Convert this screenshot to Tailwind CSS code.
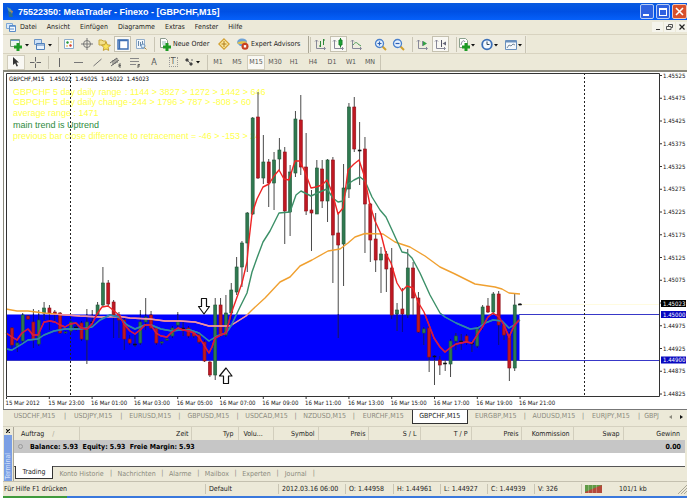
<!DOCTYPE html>
<html lang="de">
<head>
    <meta charset="UTF-8">
    <meta name="viewport" content="width=device-width, initial-scale=1.0">
    <title>75522350: MetaTrader - Finexo - [GBPCHF,M15]</title>
    <script src="https://cdn.jsdelivr.net/npm/@tailwindcss/browser@4"></script>
</head>
<body class="flex min-h-screen flex-col bg-white px-[3px] pt-[3px] font-['DejaVu_Sans_Condensed','DejaVu_Sans','Liberation_Sans',sans-serif] text-[7px] leading-[10px] text-[#222]">

    <!-- Title bar -->
    <header class="flex h-[17px] items-center bg-linear-to-b from-[#0a5be0] via-[#0050e4] to-[#0660fa] pl-[3px]">
        <svg class="mr-[4px] h-[12px] w-[8px]" viewBox="0 0 8 12"><path d="M1 1l4 2 1 3-2 1-2-3z" fill="#5a9aa8"/><path d="M2 5l4 2 1 4H3z" fill="#2c6f8a"/><path d="M4 4l3 1-1 3z" fill="#b08a5c"/></svg>
        <h1 class="grow font-['Liberation_Sans',sans-serif] text-[9px] font-bold text-white">75522350: MetaTrader - Finexo - [GBPCHF,M15]</h1>
        <div class="flex gap-[2px]">
            <button aria-label="Minimieren" class="flex h-[15px] w-[14px] items-end rounded-[2px] border border-[#b8cdf5] bg-[#2f62e0] p-[2px]"><span class="h-[2px] w-[6px] bg-white"></span></button>
            <button aria-label="Maximieren" class="flex h-[15px] w-[14px] items-center justify-center rounded-[2px] border border-[#b8cdf5] bg-[#2f62e0]"><span class="h-[8px] w-[8px] border border-t-2 border-white"></span></button>
            <button aria-label="Schließen" class="flex h-[15px] w-[15px] items-center justify-center rounded-[2px] border border-[#f0c8bc] bg-[#d8502c]"><svg class="h-[9px] w-[9px]" viewBox="0 0 9 9"><path d="M1 1l7 7M8 1L1 8" stroke="#fff" stroke-width="1.6"/></svg></button>
        </div>
    </header>

    <!-- Menu -->
    <nav class="flex h-[14px] items-center gap-[10px] bg-[#ece9d8] pl-[3px]">
        <svg class="-mr-[6px] h-[10px] w-[10px]" viewBox="0 0 10 10"><path d="M.5 1.500h6v5h-6z" fill="#dcebfa" stroke="#7ba6d6"/><path d="M3.500 3.500h6v6h-6z" fill="#f4f9ff" stroke="#5b8cc8"/><path d="M4 4.500h5" stroke="#7ba6d6"/><path d="M5 8V6m2 2V6" stroke="#5b8cc8"/></svg>
        <button>Datei</button>
        <button>Ansicht</button>
        <button>Einfügen</button>
        <button>Diagramme</button>
        <button>Extras</button>
        <button>Fenster</button>
        <button>Hilfe</button>
        <div class="ml-auto flex gap-px">
            <button aria-label="Fenster minimieren" class="flex h-[10px] w-[11px] items-end justify-center bg-[#f5f4ec] pb-[2px]"><span class="h-px w-[4px] bg-[#333]"></span></button>
            <button aria-label="Fenster wiederherstellen" class="flex h-[10px] w-[11px] items-center justify-center bg-[#f5f4ec]"><svg class="h-[7px] w-[7px]" viewBox="0 0 7 7"><path d="M2.500 2V.5h4v3H5M.5 2.500H5v3H.5z" fill="none" stroke="#555"/></svg></button>
            <button aria-label="Fenster schließen" class="flex h-[10px] w-[11px] items-center justify-center bg-[#f5f4ec]"><svg class="h-[6px] w-[6px]" viewBox="0 0 6 6"><path d="M.5.5l5 5M5.500.5l-5 5" stroke="#222" stroke-width="1.200"/></svg></button>
        </div>
    </nav>

    <!-- Standard toolbar -->
    <div class="flex h-[19px] items-center gap-px border-t border-[#d8d3c0] bg-[#efecdf] pl-[5px]">
        <button aria-label="Neues Diagramm" class="flex w-[22px] items-center"><svg class="h-[15px] w-[22px]" viewBox="0 0 22 15"><path d="M2.500 2.500h9v7h-9z" fill="#eef6ee" stroke="#7d9a80"/><path d="M3 3.500h8" stroke="#6b9ad0"/><path d="M10 6v8M6 10h8" stroke="#1d9a24" stroke-width="3"/><path d="M17 7h4l-2 2.500z" fill="#111"/></svg></button>
        <button aria-label="Profile" class="flex w-[22px] items-center"><svg class="h-[15px] w-[22px]" viewBox="0 0 22 15"><path d="M3.500 2.500h7v5h-7z" fill="#cfe2f7" stroke="#6a94c8"/><path d="M5.500 6.500h8v6h-8z" fill="#eaf3fc" stroke="#5080bb"/><path d="M6 8h7" stroke="#5080bb"/><path d="M17 7h4l-2 2.500z" fill="#111"/></svg></button>
        <span class="ml-1 h-[15px] w-px bg-[#c9c5b4]"></span>
        <button aria-label="Marktübersicht" class="flex h-[15px] w-[17px] items-center justify-center"><svg class="h-[12px] w-[12px]" viewBox="0 0 12 12"><path d="M1.500 1.500h9v9h-9z" fill="#fafdff" stroke="#8aaacb"/><path d="M3 4l2-1 1 2-2 1z" fill="#2a9a3a"/><path d="M6 7l2-1 1 2-2 1z" fill="#d8402c"/><path d="M4 7v2M8 3v2" stroke="#e0a52c"/></svg></button>
        <button aria-label="Datenfenster" class="flex h-[15px] w-[17px] items-center justify-center"><svg class="h-[12px] w-[12px]" viewBox="0 0 12 12"><circle cx="6" cy="6" r="3.500" fill="none" stroke="#777"/><path d="M6 0v12M0 6h12" stroke="#777"/></svg></button>
        <button aria-label="Navigator" class="flex h-[15px] w-[17px] items-center justify-center"><svg class="h-[13px] w-[13px]" viewBox="0 0 13 13"><path d="M1 2h3l1 1h3v4H1z" fill="#f3e08a" stroke="#c9a83a"/><path d="M8 4l1.400 2.800 3 .4-2.200 2.200.5 3L8 11l-2.700 1.400.5-3-2.200-2.200 3-.4z" fill="#fbe45a" stroke="#b98f1e" stroke-width=".8"/></svg></button>
        <button aria-label="Terminal" aria-pressed="true" class="flex h-[16px] w-[17px] items-center justify-center border border-[#c5c1b0] bg-[#f9f8f3]"><svg class="h-[11px] w-[12px]" viewBox="0 0 12 11"><path d="M1 1h10v9H1z" fill="#fff" stroke="#3c6eb4" stroke-width="1.400"/><path d="M2 1.500h8M2.500 2v8" stroke="#3c6eb4" stroke-width="1.400"/></svg></button>
        <button aria-label="Strategietester" class="flex h-[15px] w-[17px] items-center justify-center"><svg class="h-[12px] w-[12px]" viewBox="0 0 12 12"><path d="M1.500 1.500h8v9h-8z" fill="#f2f7fc" stroke="#92aecb"/><path d="M3.500 3v5M5.500 4v4M7.500 3v4" stroke="#6788aa"/><circle cx="8" cy="8" r="2" fill="#dcecf9" stroke="#6c93bd"/><path d="M9.500 9.500l2 2" stroke="#b38a3c"/></svg></button>
        <span class="ml-1 h-[15px] w-px bg-[#c9c5b4]"></span>
        <button class="flex w-[58px] items-center gap-[2px] pl-[3px] whitespace-nowrap"><svg class="h-[13px] w-[12px] shrink-0" viewBox="0 0 12 13"><path d="M1.500.5h5l2 2v7h-7z" fill="#fff" stroke="#8c9a8c"/><path d="M3 4h4M3 6h4" stroke="#9bb"/><path d="M8 5v8M4 9h8" stroke="#1d9a24" stroke-width="3"/></svg>Neue Order</button>
        <button aria-label="MetaEditor" class="flex w-[17px] items-center justify-center"><svg class="h-[12px] w-[12px]" viewBox="0 0 12 12"><path d="M6 .8L11.200 6 6 11.200.8 6z" fill="#fbe9a0" stroke="#d2a032" stroke-width="1.200"/><path d="M6 3v6M3.500 6h5" stroke="#b07d1c"/></svg></button>
        <button class="flex w-[72px] items-center gap-[2px] pl-[3px] whitespace-nowrap"><svg class="h-[12px] w-[13px] shrink-0" viewBox="0 0 13 12"><path d="M1 5c0-3 2-4.500 5-4.500S11 2 11 4L9 8H4z" fill="#6fa3d6"/><path d="M1 5c2-2 8-2 10-1l-2 2H3z" fill="#e6c24a"/><circle cx="9" cy="8.300" r="3.500" fill="#c84020"/><path d="M7.800 7.100h2.400v2.400H7.800z" fill="#fff"/></svg>Expert Advisors</button>
        <span class="ml-[2px] h-[17px] w-px bg-[#aaa695]"></span><span class="h-[15px] w-px bg-[#c9c5b4]"></span>
        <button aria-label="Balkendiagramm" class="flex h-[15px] w-[17px] items-center justify-center"><svg class="h-[12px] w-[13px]" viewBox="0 0 13 12"><path d="M2.500 2v8.500H11M1 3.500L2.500 2 4 3.500M10 9l1.500 1.500L10 12" fill="none" stroke="#889"/><path d="M6.500 3v6M5 8h1.500M9.500 1v6M9.500 2H11" stroke="#2f8a3a"/></svg></button>
        <button aria-label="Kerzendiagramm" aria-pressed="true" class="flex h-[16px] w-[17px] items-center justify-center border border-[#c5c1b0] bg-[#f9f8f3]"><svg class="h-[12px] w-[13px]" viewBox="0 0 13 12"><path d="M2.500 2v8.500H11M1 3.500L2.500 2 4 3.500M10 9l1.500 1.500L10 12" fill="none" stroke="#889"/><path d="M8.500 0v9.500" stroke="#18802a"/><path d="M7 2h3v5H7z" fill="#1ca634" stroke="#18802a"/></svg></button>
        <button aria-label="Liniendiagramm" class="flex h-[15px] w-[17px] items-center justify-center"><svg class="h-[12px] w-[13px]" viewBox="0 0 13 12"><path d="M2.500 2v8.500H11M1 3.500L2.500 2 4 3.500M10 9l1.500 1.500L10 12" fill="none" stroke="#889"/><path d="M3 7c2-3 4-3 5-1l3 2" fill="none" stroke="#4a9a54"/></svg></button>
        <button aria-label="Vergrößern" class="ml-[6px] flex h-[15px] w-[17px] items-center justify-center"><svg class="h-[13px] w-[13px]" viewBox="0 0 13 13"><path d="M8 8l4 4" stroke="#d0a030" stroke-width="2"/><circle cx="5.500" cy="5.500" r="4" fill="#e6f1fd" stroke="#4a80cc" stroke-width="1.300"/><path d="M5.500 3.500v4M3.500 5.500h4" stroke="#2d60b4" stroke-width="1.200"/></svg></button>
        <button aria-label="Verkleinern" class="flex h-[15px] w-[17px] items-center justify-center"><svg class="h-[13px] w-[13px]" viewBox="0 0 13 13"><path d="M8 8l4 4" stroke="#d0a030" stroke-width="2"/><circle cx="5.500" cy="5.500" r="4" fill="#e6f1fd" stroke="#4a80cc" stroke-width="1.300"/><path d="M3.500 5.500h4" stroke="#2d60b4" stroke-width="1.200"/></svg></button>
        <span class="ml-1 h-[15px] w-px bg-[#c9c5b4]"></span>
        <button aria-label="Automatisch scrollen" class="flex h-[15px] w-[17px] items-center justify-center"><svg class="h-[12px] w-[13px]" viewBox="0 0 13 12"><path d="M2.500 2v8.500H11M1 3.500L2.500 2 4 3.500M10 9l1.500 1.500L10 12" fill="none" stroke="#889"/><path d="M6.500 3v5" stroke="#889"/><path d="M7 3l4 2.500L7 8z" fill="#35a045"/></svg></button>
        <button aria-label="Diagrammverschiebung" aria-pressed="true" class="flex h-[16px] w-[17px] items-center justify-center border border-[#c5c1b0] bg-[#f9f8f3]"><svg class="h-[12px] w-[13px]" viewBox="0 0 13 12"><path d="M2.500 2v8.500H11M1 3.500L2.500 2 4 3.500M10 9l1.500 1.500L10 12" fill="none" stroke="#889"/><path d="M7.500 2v7" stroke="#556"/><path d="M12 3.500L8.500 5.500 12 7.500z" fill="#667"/></svg></button>
        <span class="ml-[6px] h-[15px] w-px bg-[#c9c5b4]"></span>
        <button aria-label="Indikatoren" class="flex w-[20px] items-center"><svg class="h-[15px] w-[20px]" viewBox="0 0 20 15"><path d="M1.500 1.500h6l2 2v7h-8z" fill="#fff" stroke="#8aa08c"/><path d="M3 8c1-5 3-5 4-3" fill="none" stroke="#889"/><path d="M8 6v8M4 10h8" stroke="#1d9a24" stroke-width="3"/><path d="M13 7h4l-2 2.500z" fill="#111"/></svg></button>
        <button aria-label="Perioden" class="flex w-[22px] items-center"><svg class="h-[15px] w-[22px]" viewBox="0 0 22 15"><circle cx="8" cy="7.500" r="4.800" fill="#f5faff" stroke="#3c70b8" stroke-width="1.800"/><path d="M8 4.500v3h2.500" fill="none" stroke="#345"/><path d="M15 7h4l-2 2.500z" fill="#111"/></svg></button>
        <button aria-label="Vorlagen" class="flex w-[22px] items-center"><svg class="h-[15px] w-[22px]" viewBox="0 0 22 15"><path d="M3.500 3.500h11v9h-11z" fill="#f3f7fb" stroke="#6a90bd"/><path d="M4 4.500h10" stroke="#6a90bd" stroke-width="2"/><path d="M5 11l2-3 2 1 2-2 2 1" fill="none" stroke="#789"/><path d="M16 7h4l-2 2.500z" fill="#111"/></svg></button>
        <span class="h-[17px] w-px bg-[#c9c5b4]"></span>
        <span class="h-full grow bg-[#ece9d8]"></span>
    </div>

    <!-- Drawing tools and timeframes -->
    <div class="flex h-[17px] items-center gap-px border-t border-[#d8d3c0] bg-[#ece9d8] pl-[4px] text-[#555]">
        <button aria-label="Cursor" aria-pressed="true" class="flex h-[15px] w-[18px] items-center justify-center border border-[#d0ccbb] bg-[#f9f8f3]"><svg class="h-[10px] w-[8px]" viewBox="0 0 8 10"><path d="M1 0l6 5.500H4.500L6 9 4.500 9.600 3.200 6.300 1 8z" fill="#333"/></svg></button>
        <button aria-label="Fadenkreuz" class="flex h-[15px] w-[18px] items-center justify-center"><svg class="h-[11px] w-[11px]" viewBox="0 0 11 11"><path d="M5.500 0v4.500M5.500 6.500V11M0 5.500h4.500M6.500 5.500H11" stroke="#666"/></svg></button>
        <span class="ml-[3px] h-[13px] w-px bg-[#c9c5b4]"></span>
        <button aria-label="Vertikale Linie" class="flex h-[15px] w-[18px] items-center justify-center"><span class="h-[9px] w-px bg-[#666]"></span></button>
        <button aria-label="Horizontale Linie" class="flex h-[15px] w-[18px] items-center justify-center"><span class="h-px w-[9px] bg-[#777]"></span></button>
        <button aria-label="Trendlinie" class="flex h-[15px] w-[18px] items-center justify-center"><svg class="h-[9px] w-[9px]" viewBox="0 0 9 9"><path d="M.5 8l8-7" stroke="#777"/></svg></button>
        <button aria-label="Kanal" class="flex h-[15px] w-[18px] items-center justify-center"><svg class="h-[11px] w-[12px]" viewBox="0 0 12 11"><path d="M0 6l7-5M1 9l8-6M3 3v5M5 2v5M7 1v5" stroke="#666"/><path d="M11 7H9v3h2M9 8.500h2" fill="none" stroke="#444" stroke-width=".8"/></svg></button>
        <button aria-label="Fibonacci" class="flex h-[15px] w-[18px] items-center justify-center"><svg class="h-[11px] w-[12px]" viewBox="0 0 12 11"><path d="M1 1.500h9M1 4.500h9M1 7.500h6" stroke="#888"/><path d="M11 7.500H9V11M9 9h2" fill="none" stroke="#444" stroke-width=".8"/></svg></button>
        <button aria-label="Text" class="flex h-[15px] w-[18px] items-center justify-center text-[9px]">A</button>
        <button aria-label="Textmarke" class="flex h-[15px] w-[18px] items-center justify-center"><span class="h-[10px] w-[9px] border border-dotted border-[#999] text-center text-[8px] leading-[8px]">T</span></button>
        <button aria-label="Pfeile" class="flex h-[15px] w-[20px] items-center"><svg class="h-[12px] w-[20px]" viewBox="0 0 20 12"><path d="M2 4l2-2 2 2-2 2zM6 8l2-2 2 2-2 2z" fill="#444"/><path d="M5 5l2 2M8 4h2" stroke="#666"/><path d="M13 5h4l-2 2.500z" fill="#111"/></svg></button>
        <span class="ml-[3px] h-[15px] w-px bg-[#c9c5b4]"></span>
        <button class="h-[15px] w-[18px]">M1</button>
        <button class="h-[15px] w-[18px]">M5</button>
        <button aria-pressed="true" class="h-[15px] w-[18px] border border-[#d0ccbb] bg-[#f9f8f3]">M15</button>
        <button class="h-[15px] w-[18px]">M30</button>
        <button class="h-[15px] w-[18px]">H1</button>
        <button class="h-[15px] w-[18px]">H4</button>
        <button class="h-[15px] w-[18px]">D1</button>
        <button class="h-[15px] w-[18px]">W1</button>
        <button class="h-[15px] w-[18px]">MN</button>
        <span class="h-[15px] w-px bg-[#c9c5b4]"></span>
    </div>

    <!-- Chart -->
    <main class="border-t-2 border-l border-[#8a887c]">
        <svg id="chart" class="block h-auto w-full" viewBox="4 72 683 337" role="img" aria-label="GBPCHF,M15">
            <defs>
                <clipPath id="band"><rect x="6" y="314" width="514" height="46"/></clipPath>
            </defs>
            <path d="M520 304.500H659" stroke="#fffbe0"/>
            <rect x="6" y="314.500" width="513.500" height="46" fill="#0000fe"/>
            <path d="M519 314.500H659M519 360.500H659M6 360.500h514" stroke="#3838c8"/>
            <g id="legend" font-family="Liberation Sans, sans-serif" font-size="9" fill="#ffff4d">
                <text x="13" y="95">GBPCHF 5 day daily range</text><text x="125" y="95">: 1144 &gt; 3827 &gt; 1272 &gt; 1442 &gt; 646</text>
                <text x="13" y="105">GBPCHF 5 day daily change</text><text x="124" y="105">: -244 &gt; 1796 &gt; 787 &gt; -808 &gt; 60</text>
                <text x="13" y="116">average range : 1471</text>
                <text x="13" y="128" fill="#2e8b3e">main trend is Uptrend</text>
                <text x="13" y="139">previous bar close difference to retracement = -46 &gt; -153 &gt; 24</text>
            </g>
            <path d="M70.500 73V396M584.500 73V396" stroke="#222" stroke-dasharray="2 2"/>
            <g id="candles"></g>
            <g id="averages" fill="none" stroke-width="1.400" stroke-linejoin="round"></g>
            <g fill="#fff" stroke="#111" stroke-width="1.200" stroke-linejoin="round">
                <path d="M201.500 298.500h5v8h3l-5.500 7.500-5.500-7.500h3z"/>
                <path d="M223.500 383.500h5v-7.500h3.500l-6-8-6.500 8h4z"/>
            </g>
            <path d="M6.500 396.500V73.500H659.500V396.500z" fill="none" stroke="#333"/>
            <text x="9" y="81" font-size="6" fill="#000">GBPCHF,M15&#160;&#160; 1.45022&#160; 1.45025&#160; 1.45022&#160; 1.45023</text>
            <g id="axes" font-size="6" fill="#111"></g>
        </svg>
    </main>

    <!-- Chart tabs -->
    <div class="flex h-[17px] items-start overflow-hidden border-t border-[#777] bg-[#ece9d8] pl-[2px] leading-[13px] whitespace-nowrap text-[#8b897d]">
        <button class="w-[59px]">USDCHF,M15</button><span>|</span>
        <button class="w-[54px]">USDJPY,M15</button><span>|</span>
        <button class="w-[56px]">EURUSD,M15</button><span>|</span>
        <button class="w-[56px]">GBPUSD,M15</button><span>|</span>
        <button class="w-[56px]">USDCAD,M15</button><span>|</span>
        <button class="w-[56px]">NZDUSD,M15</button><span>|</span>
        <button class="w-[57px]">EURCHF,M15</button>
        <button aria-current="true" class="-mt-px h-[15px] w-[56px] border border-t-0 border-[#333] bg-white text-[#222]">GBPCHF,M15</button>
        <button class="w-[56px]">EURGBP,M15</button><span>|</span>
        <button class="w-[56px]">AUDUSD,M15</button><span>|</span>
        <button class="w-[54px]">EURJPY,M15</button><span>|</span>
        <button class="ml-[4px]">GBPJ</button>
        <span class="grow"></span>
        <button aria-label="Zurück" class="flex h-[13px] w-[11px] items-center justify-center"><svg class="h-[4px] w-[3px]" viewBox="0 0 3 4"><path d="M3 0v4L0 2z" fill="#8b897d"/></svg></button>
        <button aria-label="Weiter" class="flex h-[13px] w-[11px] items-center justify-center"><svg class="h-[4px] w-[3px]" viewBox="0 0 3 4"><path d="M0 0v4l3-2z" fill="#111"/></svg></button>
    </div>

    <!-- Terminal -->
    <section class="flex h-[55px] border-t border-[#d5d1c0] bg-[#ece9d8]">
        <div class="flex w-[10px] flex-col">
            <button aria-label="Terminal schließen" class="flex h-[8px] items-center justify-center"><svg class="h-[4px] w-[4px]" viewBox="0 0 4 4"><path d="M0 0l4 4M4 0L0 4" stroke="#111" stroke-width="1.200"/></svg></button>
            <div class="mx-px flex grow items-end justify-center bg-[#7b9fe4] text-[#d6e2fa]"><span class="rotate-180 pt-[2px] leading-[8px] [writing-mode:vertical-rl]">Terminal</span></div>
        </div>
        <div class="mr-[2px] flex min-w-0 grow flex-col border-l border-[#aca899] bg-white">
            <table class="w-full table-fixed border-collapse whitespace-nowrap">
                <colgroup>
                    <col class="w-[65px]"><col class="w-[112px]"><col class="w-[47px]"><col class="w-[35px]"><col class="w-[45px]"><col class="w-[50px]"><col class="w-[52px]"><col class="w-[51px]"><col class="w-[50px]"><col class="w-[52px]"><col class="w-[50px]"><col>
                </colgroup>
                <thead>
                    <tr class="h-[13px] bg-[#ece9d8] text-right">
                        <th class="border-r border-[#d2cebd] pl-[7px] text-left font-normal">Auftrag <span class="pl-[6px] text-[#aaa695]">/</span></th>
                        <th class="border-r border-[#d2cebd] pr-[2px] font-normal">Zeit</th>
                        <th class="border-r border-[#d2cebd] pr-[4px] font-normal">Typ</th>
                        <th class="border-r border-[#d2cebd] pl-[5px] text-left font-normal">Volu...</th>
                        <th class="border-r border-[#d2cebd] pr-[3px] font-normal">Symbol</th>
                        <th class="border-r border-[#d2cebd] pr-[2px] font-normal">Preis</th>
                        <th class="border-r border-[#d2cebd] pr-[3px] font-normal">S / L</th>
                        <th class="border-r border-[#d2cebd] pr-[3px] font-normal">T / P</th>
                        <th class="border-r border-[#d2cebd] pr-[2px] font-normal">Preis</th>
                        <th class="border-r border-[#d2cebd] pr-[3px] font-normal">Kommission</th>
                        <th class="border-r border-[#d2cebd] pr-[3px] font-normal">Swap</th>
                        <th class="pr-[5px] font-normal">Gewinn</th>
                    </tr>
                </thead>
                <tbody>
                    <tr class="h-[13px] bg-[#c6c6c6] font-bold text-black">
                        <td colspan="11" class="pl-[4px]"><span class="mr-[7px] inline-block h-[5px] w-[5px] rounded-full border border-[#999]"></span><span class="whitespace-pre">Balance: 5.93  Equity: 5.93  Freie Margin: 5.93</span></td>
                        <td class="pr-[4px] text-right">0.00</td>
                    </tr>
                </tbody>
            </table>
            <div class="mt-auto flex h-[15px] border-t border-[#555] bg-[#ece9d8] pl-px leading-[13px] text-[#8b897d]">
                <button aria-current="true" class="-mt-px h-[13px] w-[38px] border border-t-0 border-[#333] bg-white text-[#222]">Trading</button>
                <button class="w-[57px]">Konto Historie</button><span>|</span>
                <button class="w-[49px]">Nachrichten</button><span>|</span>
                <button class="w-[34px]">Alarme</button><span>|</span>
                <button class="w-[35px]">Mailbox</button><span>|</span>
                <button class="w-[40px]">Experten</button><span>|</span>
                <button class="w-[34px]">Journal</button><span>|</span>
            </div>
        </div>
    </section>

    <!-- Status bar -->
    <footer class="flex h-[15px] items-center border-t border-[#c4c0af] bg-[#ece9d8] whitespace-nowrap">
        <span class="grow pl-[1px]">Für Hilfe F1 drücken</span>
        <span class="w-[73px] border-l border-[#c9c5b4] pl-[3px]">Default</span>
        <span class="w-[67px] border-l border-[#c9c5b4] pl-[3px]">2012.03.16 06:00</span>
        <span class="w-[48px] border-l border-[#c9c5b4] pl-[3px]">O: 1.44958</span>
        <span class="w-[47px] border-l border-[#c9c5b4] pl-[3px]">H: 1.44961</span>
        <span class="w-[47px] border-l border-[#c9c5b4] pl-[3px]">L: 1.44927</span>
        <span class="w-[47px] border-l border-[#c9c5b4] pl-[3px]">C: 1.44939</span>
        <span class="w-[47px] border-l border-[#c9c5b4] pl-[3px]">V: 326</span>
        <span class="flex w-[106px] items-center gap-[17px] border-l border-[#c9c5b4] pl-[3px]">
            <svg class="h-[8px] w-[17px]" viewBox="0 0 17 8"><rect width="17" height="8" fill="#b5493a"/><path d="M0 0h17L0 7z" fill="#5f9a45"/><path d="M3.500 0v8M7.500 0v8M11.500 0v8" stroke="#ece9d8" stroke-width=".3"/></svg>
            101/1 kb
            <svg class="ml-auto h-[10px] w-[9px]" viewBox="0 0 9 10"><path d="M0 10l9-9M3 10l6-6M6 10l3-3" stroke="#aaa695"/></svg>
        </span>
    </footer>
    <div class="flex h-[2px] bg-[#3a78dc]"><span class="w-[64px] bg-[#3f9a3c]"></span></div>

    <script>
        const NS = "http://www.w3.org/2000/svg";

        // [direction, high, body top, body bottom, low]
        const candles = [
            ["r",327,328,345,348],["g",340,343,346,352],["g",313,315,341,343],["r",315,316,319,320],["r",309,322,340,348],
            ["g",310,320,344,346],["g",302,308,313,320],["r",305,308,313,330],["r",310,312,314,322],["r",312,313,333,334],
            ["g",331,332,333,334],["g",320,322,331,333],["d",322,327,328,331],["r",321,323,339,341],["g",309,322,340,364],
            ["d",310,322,323,328],["g",302,305,315,318],["g",267,283,305,307],["r",280,283,304,306],["r",300,302,315,338],
            ["r",312,315,320,338],["r",318,320,339,350],["r",335,339,343,345],["d",335,344,345,347],["g",310,322,343,345],
            ["g",298,317,322,330],["r",311,315,328,330],["r",326,328,343,345],["g",341,342,343,345],["g",338,339,340,341],
            ["g",326,328,336,338],["g",312,322,325,328],["d",322,328,329,336],["r",326,328,336,338],["r",332,333,336,338],
            ["r",333,335,342,344],["r",340,342,361,362],["r",361,362,375,377],["g",298,305,375,380],["r",298,305,335,337],
            ["g",295,313,335,337],["g",283,290,313,320],["g",257,267,292,295],["g",241,243,267,287],["g",212,213,243,272],
            ["g",117,118,214,215],["r",92,117,178,179],["g",135,162,178,184],["r",159,162,183,207],["g",152,160,183,210],
            ["g",138,150,159,170],["r",147,152,211,244],["g",165,172,212,236],["g",111,119,173,177],["r",95,120,167,175],
            ["r",133,167,211,215],["r",190,210,213,251],["g",160,168,214,214],["r",160,169,201,208],["g",159,160,201,222],
            ["r",157,160,235,283],["r",213,233,245,338],["g",164,188,244,286],["g",103,107,189,198],["r",97,107,149,152],
            ["d",122,150,151,185],["r",137,149,204,253],["r",203,204,240,262],["r",213,239,260,272],["g",247,254,260,293],
            ["r",251,254,269,292],["r",248,268,315,319],["g",303,310,314,331],["r",288,309,314,332],["g",249,268,315,318],
            ["r",262,268,298,315],["r",292,298,332,333],["g",327,329,333,345],["r",326,328,357,372],["d",355,356,357,385],
            ["r",356,360,365,375],["d",360,363,364,371],["g",339,341,364,377],["g",333,336,341,350],["d",334,341,342,350],
            ["r",334,336,342,345],["d",341,343,344,352],["g",326,329,346,348],["g",305,307,325,330],["r",298,306,312,313],
            ["g",292,294,312,315],["r",291,294,325,345],["r",323,325,335,340],["r",332,335,368,381],["g",293,305,368,371],
            ["d",303,304,305,305]
        ];

        const averages = [
            { color: "#f0a030", inBand: "#f08cb4", points: "6,309 17,311 28,311 44,313 60,314.500 80,316 100,317 120,316.500 130,318 150,319 165,321 180,321 195,322 209,326 230,326 246,316 252,310 265,298 280,282 290,277 300,266 312,260 328,251 340,249 348,243 355,237 365,233.500 383,234 395,242 410,247 425,256 440,267 455,274 475,284 495,287 502,289 509,293 520,294" },
            { color: "#3c9068", inBand: "#2c84b4", points: "6,349 12,350 17,347 22,344 28,340 38,339 44,335 54,331 65,329 81,329 92,327 100,320 110,315 119,317 127,325 135,329 145,325 151,325 161,329 172,331 180,330 190,330 199,333 209,341 217,336 226,333 231,326 240,307 247,293 252,272 257,258 263,242 270,231 279,213 290,212 296,195 301,191 311,196 322,191 327,189 333,198 338,202 343,201 348,184 354,180 360,177 365,181 372,197 380,210 386,217 392,230 402,252 407,253 412,258 420,273 430,295 440,313 445,317 456,323 470,329 478,328 485,323 493,320 502,321 509,328 514,325 520,320" },
            { color: "#ee2424", inBand: "#d01848", points: "6,333 12,337 17,340 22,333 28,329 33,335 38,335 44,322 50,321 55,322 60,325 65,327 70,324 76,323 81,328 87,329 92,324 97,314 102,307 108,306 113,310 119,315 124,324 130,331 135,334 140,330 145,325 151,325 156,333 161,336 167,337 172,332 178,328 183,330 189,331 194,333 199,337 204,345 209,353 212,347 215,338 221,335 226,333 231,314 236,300 242,283 247,262 249,240 252,214 257,199 263,187 269,184 274,176 279,170 284,179 289,180 295,161 300,161 305,172 311,188 316,187 322,185 327,180 332,192 338,214 343,208 348,170 354,164 359,160 364,175 370,205 375,221 381,234 386,254 391,263 397,283 402,291 407,286 413,288 418,302 424,312 429,325 434,338 440,347 445,352 450,348 456,344 461,343 466,342 472,343 477,335 483,326 488,317 493,313 499,317 504,325 509,337 514,326 519,320" }
        ];

        const fills = { r: "#c01822", g: "#2f7a50", d: "#111" };
        const edges = { r: "#8a1018", g: "#1f5436", d: "#111" };

        function add(parent, name, attrs, text) {
            const el = document.createElementNS(NS, name);
            for (const key in attrs) el.setAttribute(key, attrs[key]);
            if (text) el.textContent = text;
            document.getElementById(parent).appendChild(el);
        }

        candles.forEach(([dir, high, top, bottom, low], i) => {
            const x = 12 + i * 5.348;
            add("candles", "path", { d: `M${x} ${high}V${low}`, stroke: "#4a4a4a" });
            if (low > 315) add("candles", "path", { d: `M${x} ${high}V${low}`, stroke: "#000098", "clip-path": "url(#band)" });
            add("candles", "rect", { x: x - 1.5, y: top, width: 3, height: bottom - top, fill: fills[dir], stroke: edges[dir], "stroke-width": 0.6 });
        });

        averages.forEach(({ color, inBand, points }) => {
            add("averages", "polyline", { points, stroke: color });
            add("averages", "polyline", { points, stroke: inBand, "clip-path": "url(#band)" });
        });

        const prices = ["1.45525", "1.45475", "1.45425", "1.45375", "1.45325", "1.45275", "1.45225", "1.45175", "1.45125", "1.45075", "", "1.44975", "1.44925", "1.44875", "1.44825"];
        prices.forEach((price, i) => {
            const y = 75.5 + i * 22.75;
            add("axes", "path", { d: `M660 ${y}h2`, stroke: "#333" });
            if (price) add("axes", "text", { x: 663, y: y + 2 }, price);
        });

        [["1.45023", 303.5, "#000"], ["1.45000", 314.5, "#0808c0"], ["1.44900", 360, "#0808c0"]].forEach(([price, y, color]) => {
            add("axes", "rect", { x: 661, y: y - 3.5, width: 25, height: 7, fill: color });
            add("axes", "text", { x: 663, y: y + 2, fill: "#fff" }, price);
        });

        const times = ["15 Mar 2012", "15 Mar 23:00", "16 Mar 01:00", "16 Mar 03:00", "16 Mar 05:00", "16 Mar 07:00", "16 Mar 09:00", "16 Mar 11:00", "16 Mar 13:00", "16 Mar 15:00", "16 Mar 17:00", "16 Mar 19:00", "16 Mar 21:00"];
        times.forEach((time, i) => {
            const x = 6 + i * 42.8;
            add("axes", "path", { d: `M${x + 0.5} 397v2`, stroke: "#333" });
            add("axes", "text", { x: x - 0.5, y: 405 }, time);
        });
    </script>
</body>
</html>
